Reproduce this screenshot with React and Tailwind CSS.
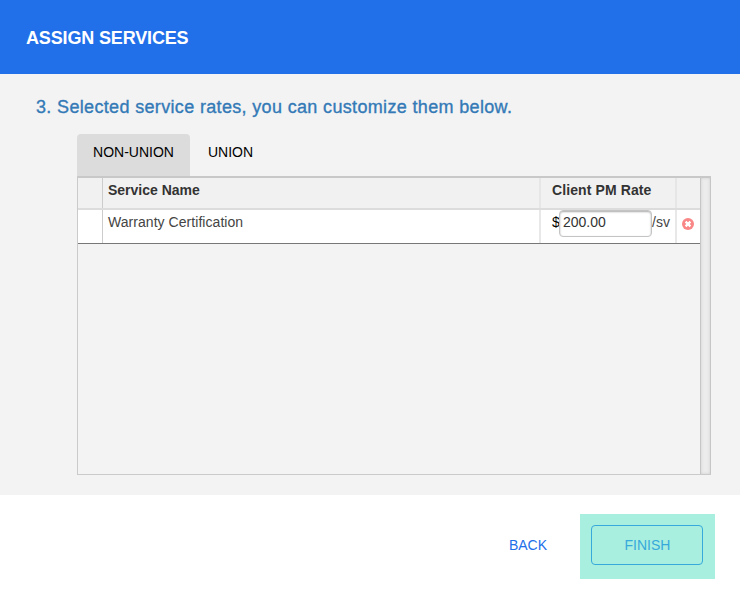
function RemoveIcon() {
  return (
    <svg viewBox="0 0 12 12" className="size-3" role="img" aria-label="Remove">
      <circle cx="6" cy="6" r="6" fill="#f98787" />
      <path d="M3.6 3.6 8.4 8.4M8.4 3.6 3.6 8.4" stroke="#fff" strokeWidth="2.3" />
    </svg>
  );
}

function RatesTable() {
  return (
    <div className="flex h-[299px] w-[634px] border-t-2 border-b border-l border-[#c8c8c8] border-b-[#cacaca] border-l-[#cacaca]">
      <div className="w-[622px] text-sm text-[#444]">
        <div className="flex h-8 border-b-2 border-[#dcdcdc] bg-[#f1f1f1] font-bold leading-[24px] text-[#333]">
          <div className="h-[30px] w-[25px] border-r border-[#ccc]" />
          <div className="h-[30px] w-[438px] border-r-2 border-[#e6e6e6] pl-[5px]">Service Name</div>
          <div className="h-[30px] w-[136px] border-r-2 border-[#e6e6e6] pl-[11px] tracking-[0.1px]">Client PM Rate</div>
        </div>
        <div className="flex h-[34px] border-b border-[#777] bg-white leading-[24px]">
          <div className="w-[25px] border-r border-[#ccc]" />
          <div className="w-[438px] border-r-2 border-[#e8e8e8] pl-[5px] tracking-[0.05px]">Warranty Certification</div>
          <div className="flex w-[136px] border-r-2 border-[#e8e8e8] pl-[11px]">
            <span className="w-[7px] text-black">$</span>
            <input
              className="h-[27px] w-[93px] shrink-0 rounded-[4px] border border-[#c4c4c4] bg-white pb-[3px] pl-[3px] text-[#333] shadow-[inset_0_1px_2px_#aaa] outline-none"
              defaultValue="200.00"
              aria-label="Client PM Rate"
            />
            <span>/sv</span>
          </div>
          <div className="pt-2 pl-[5px]">
            <RemoveIcon />
          </div>
        </div>
      </div>
      <div className="w-[11px] border-x border-[#c6c6c6] bg-[#ececec] shadow-[inset_0_0_3px_#ccc]" />
    </div>
  );
}

export default function App() {
  return (
    <div className="h-[595px] w-[740px] overflow-hidden bg-white font-['Liberation_Sans',Arial,sans-serif]">
      <header className="flex h-[74px] items-center bg-[#226fea] pt-0.5 pl-[26px]">
        <h1 className="text-lg font-bold tracking-[-0.15px] text-white">ASSIGN SERVICES</h1>
      </header>
      <main className="h-[421px] bg-[#f3f3f3] pt-[19px]">
        <h2 className="pl-9 text-lg leading-7 tracking-[0.34px] whitespace-nowrap text-[#337ab7] [-webkit-text-stroke:0.35px_#337ab7]">
          3. Selected service rates, you can customize them below.
        </h2>
        <div className="mt-[13px] ml-[77px]">
          <div className="flex h-[42px] text-sm leading-[36px] text-black">
            <button className="h-[42px] w-[113px] rounded-t-[4px] bg-[#dcdcdc] pb-1.5">NON-UNION</button>
            <button className="ml-[18px] pb-1.5">UNION</button>
          </div>
          <RatesTable />
        </div>
      </main>
      <footer className="flex h-[100px] items-start justify-end pt-[19px] pr-[25px] text-sm">
        <button className="mr-[33px] h-[62px] text-[#226fea]">BACK</button>
        <div className="h-[65px] w-[135px] bg-[#a8efe0] p-[11px]">
          <button className="h-10 w-28 rounded-[4px] border border-[#37a9da] pl-px text-[#37a9da]">FINISH</button>
        </div>
      </footer>
    </div>
  );
}
